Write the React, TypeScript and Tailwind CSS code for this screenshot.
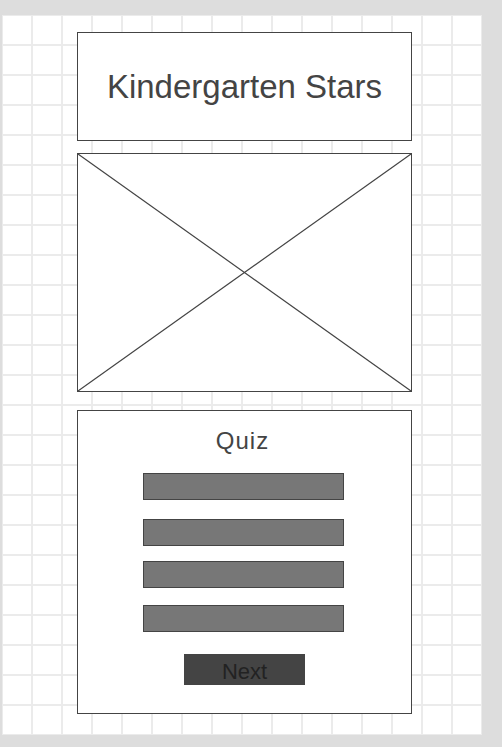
const font = { fontFamily: '"Liberation Sans", Arial, sans-serif' };

const QuizBar = ({ className }: { className: string }) => (
  <div className={`w-[201px] h-[27px] mr-[2px] border border-[#444444] bg-[#777777] ${className}`} />
);

const App = () => {
  return (
    <div
      className="w-[502px] h-[747px] bg-[#dddddd] pt-[15px] pl-[2px] overflow-hidden font-['Liberation_Sans',Arial,sans-serif]"
    >
      <div className="w-[480px] h-[720px] bg-white bg-[linear-gradient(to_right,#ebebeb_2px,transparent_2px),linear-gradient(to_bottom,#ebebeb_2px,transparent_2px)] bg-size-[30px_30px] bg-position-[29px_29px] pl-[75px] pt-[17px] flex flex-col">
        {/* header */}
        <div className="w-[335px] h-[109px] border border-[#444444] bg-white flex items-center justify-center">
          <h1 className="text-[33px] text-[#444444] font-normal">Kindergarten Stars</h1>
        </div>

        {/* image placeholder */}
        <div className="w-[335px] h-[239px] mt-[12px] border border-[#444444] bg-white">
          <svg className="block w-full h-full" viewBox="0 0 333 237" preserveAspectRatio="none">
            <line x1="0" y1="0" x2="333" y2="237" stroke="#444444" strokeWidth="1.2" />
            <line x1="333" y1="0" x2="0" y2="237" stroke="#444444" strokeWidth="1.2" />
          </svg>
        </div>

        {/* quiz */}
        <div className="w-[335px] h-[304px] mt-[18px] border border-[#444444] bg-white flex flex-col items-center pt-[15px]">
          <p className="text-[24px] leading-[30px] tracking-[1px] pr-[4px] text-[#444444]">Quiz</p>
          <QuizBar className="mt-[17px]" />
          <QuizBar className="mt-[19px]" />
          <QuizBar className="mt-[15px]" />
          <QuizBar className="mt-[17px]" />
          <button className="mt-[22px] w-[121px] h-[31px] bg-[#444444] text-[#222222] text-[22px] leading-[28px] pt-[4px] flex justify-center items-start" style={font}>
            Next
          </button>
        </div>
      </div>
    </div>
  );
};

export default App;
